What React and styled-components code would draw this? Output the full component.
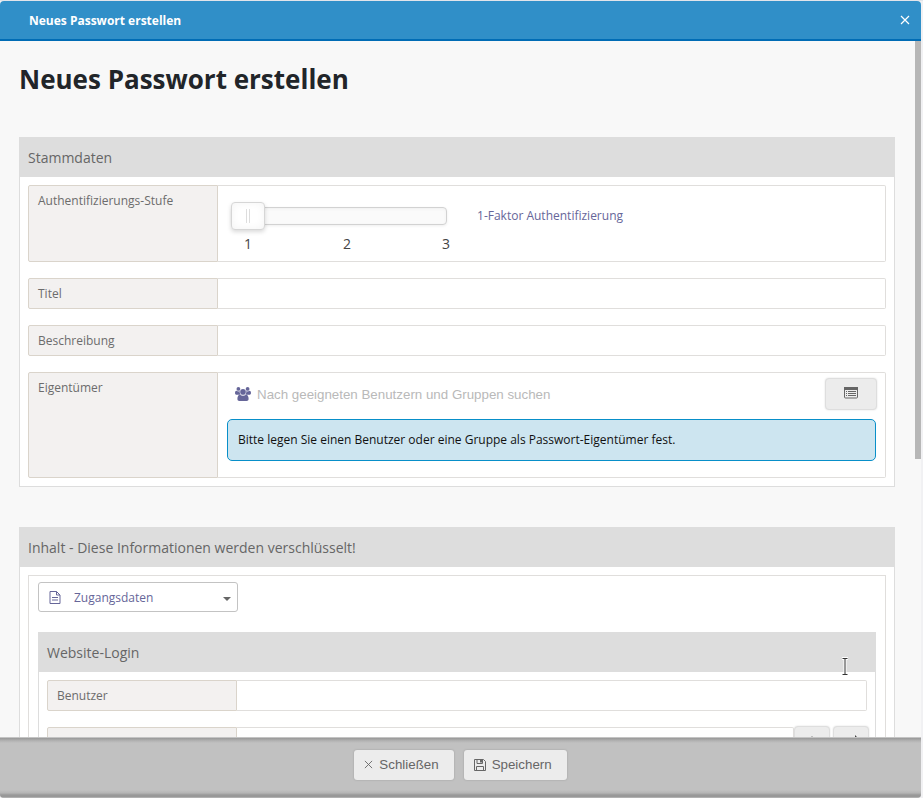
import React, { useState } from "react";
import styled, { createGlobalStyle, css } from "styled-components";

const GlobalStyle = createGlobalStyle`
  *, *::before, *::after { box-sizing: border-box; }
  body {
    margin: 0;
    background: #efeff1;
    color: #212529;
    font-family: "Open Sans", "Noto Sans", sans-serif;
    font-size: 12px;
  }
`;

const uiFont = css`
  font-family: "Liberation Sans", Arial, sans-serif;
`;

const Window = styled.div`
  height: 100vh;
  padding: 1px 2px 0 0;
  background: linear-gradient(#e2e4ea, #e2e4ea) top / 100% 1px no-repeat, #f1f1f3;
`;

const Dialog = styled.div`
  display: flex;
  flex-direction: column;
  height: 100%;
  border-radius: 4px;
  overflow: hidden;
  background: #f8f8f8;
`;

const TitleBar = styled.header`
  flex: none;
  display: flex;
  align-items: center;
  justify-content: space-between;
  height: 40px;
  padding: 0 11px 0 29px;
  background: #308fc8;
  border-bottom: 2px solid #006cb5;
  color: #fff;
  font-weight: 700;
`;

const CloseButton = styled.button`
  display: flex;
  padding: 0;
  border: 0;
  background: none;
  color: #fff;
`;

const Viewport = styled.div`
  flex: 1;
  min-height: 0;
  display: flex;
`;

const Content = styled.main`
  flex: 1;
  min-width: 0;
  padding: 0 20px 40px 19px;
  overflow-y: auto;
  scrollbar-width: none;
`;

const ScrollTrack = styled.div`
  flex: none;
  width: 6px;
`;

const ScrollThumb = styled.div`
  height: 60%;
  background: #b7b7b7;
`;

const Heading = styled.h1`
  margin: 20px 0 40px;
  font-size: 26px;
  line-height: 36px;
  font-weight: 700;
`;

const Section = styled.section`
  background: #fff;
  margin-bottom: 40px;
`;

const SectionTitle = styled.h2`
  margin: 0;
  padding: 2px 9px 0;
  background: #ddd;
  color: #666;
  font-size: 14px;
  line-height: 38px;
  font-weight: 400;
`;

const SectionBody = styled.div`
  display: flex;
  flex-direction: column;
  gap: 16px;
  padding: 8px;
  border: 1px solid #ddd;
  border-top: 0;
`;

const Row = styled.div`
  display: flex;
`;

const Label = styled.label`
  flex: none;
  width: 190px;
  padding: 6px 9px;
  border: 1px solid #dad4cb;
  border-radius: 2px 0 0 2px;
  background: #f3f1f0;
  color: #6c6c6c;
  line-height: 17px;
`;

const Cell = styled.div`
  flex: 1;
  min-width: 0;
  border: 1px solid #e0dedc;
  border-left: 0;
  border-radius: 0 2px 2px 0;
`;

const TextInput = styled.input`
  flex: 1;
  min-width: 0;
  padding: 0 9px;
  border: 1px solid #e0dedc;
  border-left: 0;
  border-radius: 0 2px 2px 0;
  background: #fff;
  font: inherit;
`;

const LevelCell = styled(Cell)`
  display: flex;
  gap: 14px;
  padding: 16px 13px 7px;
`;

const LevelControl = styled.div`
  width: 232px;
`;

const Slider = styled.input`
  display: block;
  appearance: none;
  width: 216px;
  height: 28px;
  margin: 0;
  background: none;

  &::-webkit-slider-runnable-track {
    height: 18px;
    border: 1px solid #d2d2d2;
    border-radius: 4px;
    background: #fafafa;
    box-shadow: inset 0 1px 3px #f0f0f0, 0 1px 3px #eee;
  }

  &::-webkit-slider-thumb {
    appearance: none;
    width: 34px;
    height: 28px;
    margin: -6px 0 0 -1px;
    border: 1px solid #d6d6d6;
    border-radius: 4px;
    background:
      linear-gradient(90deg, #ddd 1px, transparent 1px 3px, #ddd 3px) center / 4px 14px no-repeat,
      #fff;
    box-shadow: inset 0 0 8px #f3f3f3, 0 2px 4px rgba(0, 0, 0, 0.15);
  }
`;

const Ticks = styled.div`
  display: flex;
  justify-content: space-between;
  margin-top: 4px;
  color: #444;
  font-size: 14px;
  line-height: 20px;
`;

const Tick = styled.span`
  width: 34px;
  text-align: center;
`;

const LevelText = styled.output`
  color: #666699;
  line-height: 28px;
`;

const OwnerCell = styled(Cell)`
  padding: 5px 9px 16px;
`;

const SearchBar = styled.div`
  display: flex;
  align-items: center;
  gap: 6px;
  padding-left: 8px;
  margin: 0 -1px 9px 0;
  color: #666699;
`;

const SearchInput = styled.input`
  ${uiFont}
  flex: 1;
  min-width: 0;
  padding: 0;
  border: 0;
  background: none;

  &::placeholder { color: #b9b9b9; }
`;

const ToolButton = styled.button`
  flex: none;
  display: flex;
  align-items: center;
  justify-content: center;
  width: ${(p) => (p.$wide ? "52px" : "36px")};
  height: 32px;
  padding: 0 0 2px;
  border: 1px solid #dedede;
  border-radius: 4px;
  background: #ececec;
  box-shadow: 0 0 2px #ddd;
  color: #666;
`;

const Notice = styled.p`
  margin: 0;
  padding: 11px 10px;
  border: 1px solid #088fc9;
  border-radius: 5px;
  background: #cde5f0;
  color: #111;
  line-height: 18px;
`;

const Panel = styled.div`
  display: flex;
  flex-direction: column;
  align-items: stretch;
  gap: 20px;
  padding: 6px 9px 9px;
  border: 1px solid #e0dedc;

  ${Section} { margin-bottom: 0; }
`;

const SelectBox = styled.div`
  display: grid;
  grid-template-columns: 32px 1fr 14px;
  align-items: center;
  width: 200px;
  height: 30px;
  border: 1px solid #c3c3c3;
  border-radius: 3px;
  background: #fff;
  color: #666699;

  svg { grid-row: 1; pointer-events: none; }
  svg:first-of-type { grid-column: 1; justify-self: center; }
  svg:last-of-type { grid-column: 3; margin-top: 3px; }
`;

const Select = styled.select`
  grid-column: 1 / -1;
  grid-row: 1;
  appearance: none;
  height: 28px;
  padding: 0 24px 0 35px;
  border: 0;
  background: none;
  color: inherit;
  font: inherit;
`;

const ButtonRow = styled.div`
  display: flex;
  gap: 3px;
  height: 32px;
  margin: -1px -2px 0 0;
`;

const Footer = styled.footer`
  flex: none;
  display: flex;
  justify-content: center;
  gap: 10px;
  height: 60px;
  padding: 12px 0 18px;
  background:
    linear-gradient(#989898, #b4b4b4 3px, transparent 5px),
    linear-gradient(0deg, #b0b0b0 1px, #989898 1px 3px, #b4b4b4 5px, transparent 8px),
    #c1c1c1;
  box-shadow: 0 -1px 0 #c4c4c4;
  z-index: 1;
`;

const FooterButton = styled.button`
  ${uiFont}
  display: flex;
  align-items: center;
  gap: 6px;
  height: 30px;
  padding: 0 15px 1px 10px;
  border: 0;
  border-radius: 3px;
  background: #ececec;
  box-shadow: 0 0 2px #999;
  color: #666;
`;

const Pointer = styled.svg`
  position: absolute;
  left: 840px;
  top: 657px;
  z-index: 2;
  pointer-events: none;
`;

const CrossIcon = ({ size = 10, weight = 1.2 }) => (
  <svg width={size} height={size} viewBox="0 0 10 10" stroke="currentColor" strokeWidth={weight} aria-hidden="true">
    <path d="M1 1l8 8M9 1L1 9" />
  </svg>
);

const UsersIcon = () => (
  <svg width="16" height="14" viewBox="0 0 16 14" fill="currentColor" aria-hidden="true">
    <circle cx="3.4" cy="1.9" r="1.9" />
    <circle cx="12.6" cy="1.9" r="1.9" />
    <path d="M0 6c0-1.600.6-2.300 1.700-2.300.7.7 1.900.9 3 .4-.2 1.300.1 2.600 1 3.700H1.800C.6 7.800 0 7.200 0 6z" />
    <path d="M16 6c0-1.600-.6-2.300-1.700-2.300-.7.7-1.900.9-3 .4.200 1.300-.1 2.600-1 3.700h3.900C15.400 7.800 16 7.200 16 6z" />
    <circle cx="8" cy="4.900" r="2.800" />
    <path d="M2.400 12c0-2.700.8-4.200 2.600-4.300 1.800 1.400 4.200 1.400 6 0 1.800.1 2.600 1.600 2.600 4.300 0 1.300-.7 2-2 2H4.400c-1.300 0-2-.7-2-2z" />
  </svg>
);

const ListIcon = () => (
  <svg width="14" height="12" viewBox="0 0 14 12" fill="none" stroke="#666" aria-hidden="true">
    <rect x=".5" y=".5" width="13" height="10.500" rx="1" />
    <path d="M0 1.500h14" strokeWidth="3" />
    <path d="M2 4.500h1M2 6.500h1M2 8.500h1M4 4.500h8M4 6.500h8M4 8.500h8" />
  </svg>
);

const FileIcon = () => (
  <svg width="12" height="13" viewBox="0 0 12 13" fill="none" stroke="currentColor" aria-hidden="true">
    <path d="M1 .5h6.500L11 4v8.500H1zM7.500.5V4H11M3 6.500h6M3 9h6" />
  </svg>
);

const CaretIcon = () => (
  <svg width="8" height="4" viewBox="0 0 8 4" fill="#666" aria-hidden="true">
    <path d="M0 0h8L4 4z" />
  </svg>
);

const SaveIcon = () => (
  <svg width="12" height="12" viewBox="0 0 12 12" fill="none" stroke="currentColor" aria-hidden="true">
    <path d="M.5.500h9l2 2v9H.5zM2.500 11.500v-4h7v4M3 .5v4h5.500v-4" />
    <path d="M6 1h2v2.500H6z" fill="currentColor" stroke="none" />
  </svg>
);

const EyeIcon = () => (
  <svg width="14" height="10" viewBox="0 0 14 10" fill="none" stroke="currentColor" aria-hidden="true">
    <path d="M1 5q6-8 12 0-6 8-12 0z" />
    <circle cx="7" cy="5" r="2" />
  </svg>
);

const ShuffleIcon = () => (
  <svg width="14" height="12" viewBox="0 0 14 12" fill="none" stroke="#444" strokeWidth="2" aria-hidden="true">
    <path d="M0 3h3l5 6h3M0 9h3l5-6h3" />
    <path d="M11 0l3 3-3 3zM11 6l3 3-3 3z" fill="#444" stroke="none" />
  </svg>
);

const LEVELS = ["1", "2", "3"];

function TextRow({ id, label }) {
  return (
    <Row>
      <Label htmlFor={id}>{label}</Label>
      <TextInput id={id} type="text" />
    </Row>
  );
}

export default function App() {
  const [level, setLevel] = useState(1);
  return (
    <Window>
      <GlobalStyle />
      <Dialog role="dialog" aria-labelledby="dialog-title">
        <TitleBar>
          <span id="dialog-title">Neues Passwort erstellen</span>
          <CloseButton type="button" aria-label="Dialog schließen">
            <CrossIcon />
          </CloseButton>
        </TitleBar>
        <Viewport>
          <Content>
            <Heading>Neues Passwort erstellen</Heading>
            <Section>
              <SectionTitle>Stammdaten</SectionTitle>
              <SectionBody>
                <Row>
                  <Label htmlFor="level">Authentifizierungs-Stufe</Label>
                  <LevelCell>
                    <LevelControl>
                      <Slider
                        id="level"
                        type="range"
                        min="1"
                        max="3"
                        value={level}
                        onChange={(e) => setLevel(Number(e.target.value))}
                      />
                      <Ticks>
                        {LEVELS.map((n) => (
                          <Tick key={n}>{n}</Tick>
                        ))}
                      </Ticks>
                    </LevelControl>
                    <LevelText htmlFor="level">{level}-Faktor Authentifizierung</LevelText>
                  </LevelCell>
                </Row>
                <TextRow id="title" label="Titel" />
                <TextRow id="description" label="Beschreibung" />
                <Row>
                  <Label htmlFor="owner">Eigentümer</Label>
                  <OwnerCell>
                    <SearchBar>
                      <UsersIcon />
                      <SearchInput
                        id="owner"
                        type="text"
                        placeholder="Nach geeigneten Benutzern und Gruppen suchen"
                      />
                      <ToolButton type="button" $wide aria-label="Liste öffnen">
                        <ListIcon />
                      </ToolButton>
                    </SearchBar>
                    <Notice>
                      Bitte legen Sie einen Benutzer oder eine Gruppe als Passwort-Eigentümer fest.
                    </Notice>
                  </OwnerCell>
                </Row>
              </SectionBody>
            </Section>
            <Section>
              <SectionTitle>Inhalt - Diese Informationen werden verschlüsselt!</SectionTitle>
              <SectionBody>
                <Panel>
                  <SelectBox>
                    <FileIcon />
                    <Select aria-label="Inhaltstyp">
                      <option>Zugangsdaten</option>
                    </Select>
                    <CaretIcon />
                  </SelectBox>
                  <Section>
                    <SectionTitle>Website-Login</SectionTitle>
                    <SectionBody>
                      <TextRow id="user" label="Benutzer" />
                      <Row>
                        <Label htmlFor="password" aria-label="Passwort" />
                        <TextInput id="password" type="password" aria-label="Passwort" />
                        <ButtonRow>
                          <ToolButton type="button" aria-label="Passwort anzeigen">
                            <EyeIcon />
                          </ToolButton>
                          <ToolButton type="button" aria-label="Passwort generieren">
                            <ShuffleIcon />
                          </ToolButton>
                        </ButtonRow>
                      </Row>
                    </SectionBody>
                  </Section>
                </Panel>
              </SectionBody>
            </Section>
          </Content>
          <ScrollTrack>
            <ScrollThumb />
          </ScrollTrack>
        </Viewport>
        <Footer>
          <FooterButton type="button">
            <CrossIcon size={9} weight={1} />
            Schließen
          </FooterButton>
          <FooterButton type="button">
            <SaveIcon />
            Speichern
          </FooterButton>
        </Footer>
      </Dialog>
      <Pointer width="10" height="20" viewBox="0 0 10 20" fill="none" aria-hidden="true">
        <path d="M2 1.500h6M5 1.500v16M2 17.500h6" stroke="#fff" strokeWidth="3" />
        <path d="M2.500 1.500h5M5 1.500v16M2.500 17.500h5" stroke="#333" strokeWidth="1" />
      </Pointer>
    </Window>
  );
}
